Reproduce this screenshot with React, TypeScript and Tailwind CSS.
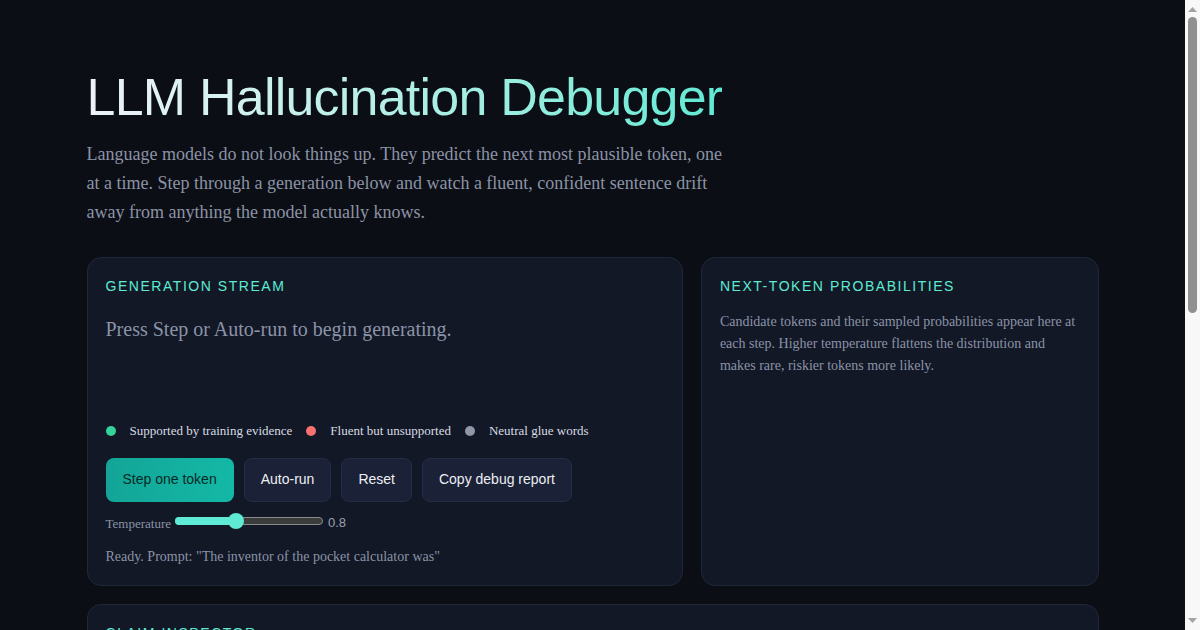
import React from "react";

const serif = { fontFamily: '"Liberation Serif", "Times New Roman", serif' };
const sans = { fontFamily: '"Liberation Sans", Arial, sans-serif' };

function Label({ children }: { children: React.ReactNode }) {
  return (
    <div
      className="text-[14px] leading-[20px] tracking-[0.11em] uppercase text-[#5eead4] font-medium"
      style={sans}
    >
      {children}
    </div>
  );
}

function LegendItem({ color, text }: { color: string; text: string }) {
  return (
    <div className="flex items-center gap-[14px]">
      <span className={`block h-[10px] w-[10px] rounded-full ${color}`} />
      <span>{text}</span>
    </div>
  );
}

function Scrollbar() {
  return (
    <div className="relative h-full w-[15px] shrink-0 bg-[#f8f8f8]">
      <svg className="absolute left-[3px] top-[7px]" width="9" height="5" viewBox="0 0 9 5">
        <polygon points="4.5,0 9,5 0,5" fill="#a3a3a3" />
      </svg>
      <div className="absolute left-[3px] top-[17px] h-[296px] w-[9px] rounded-[5px] bg-[#909090]" />
      <svg className="absolute left-[3px] top-[618px]" width="9" height="5" viewBox="0 0 9 5">
        <polygon points="0,0 9,0 4.5,5" fill="#a3a3a3" />
      </svg>
    </div>
  );
}

export default function App() {
  return (
    <div className="flex h-screen overflow-hidden bg-[#0b0e14] text-[#e5e7eb]" style={serif}>
      <div className="min-w-0 flex-1 overflow-hidden">
        <div className="mx-auto max-w-[1012px] pt-[69px] pb-16">
          <h1
            className="w-fit text-[52px] leading-[1.1] tracking-[-0.015em] font-normal bg-linear-to-r from-[#eef2f8] to-[#5eead4] bg-clip-text text-transparent"
            style={sans}
          >
            LLM Hallucination Debugger
          </h1>
          <p className="mt-[14px] max-w-[640px] text-[18px] leading-[1.6] text-[#8b93a7]">
            Language models do not look things up. They predict the next most plausible token, one
            at a time. Step through a generation below and watch a fluent, confident sentence drift
            away from anything the model actually knows.
          </p>

          <div className="mt-[30px] grid grid-cols-[1.5fr_1fr] gap-[18px]">
            <section className="rounded-[14px] border border-[#1f2839] bg-[#121826] p-[18px]">
              <Label>Generation stream</Label>
              <div className="mt-[17px] min-h-[93px] text-[20px] leading-[32px] text-[#8b93a7]">
                Press Step or Auto-run to begin generating.
              </div>
              <div className="mt-[15px] flex items-center gap-[14px] text-[13px] leading-[20px] text-[#d7dbe3]">
                <LegendItem color="bg-[#34d399]" text="Supported by training evidence" />
                <LegendItem color="bg-[#f87171]" text="Fluent but unsupported" />
                <LegendItem color="bg-[#8f97a9]" text="Neutral glue words" />
              </div>
              <div className="mt-[17px] flex gap-[10px] text-[14px]" style={sans}>
                <button className="h-[44px] rounded-[8px] bg-linear-to-r from-[#13a597] to-[#14b8a6] px-[17px] text-[#052a26]">
                  Step one token
                </button>
                <button className="h-[44px] rounded-[8px] border border-[#252d44] bg-[#1b2136] px-4 text-[#eceff4]">
                  Auto-run
                </button>
                <button className="h-[44px] rounded-[8px] border border-[#252d44] bg-[#1b2136] px-4 text-[#eceff4]">
                  Reset
                </button>
                <button className="h-[44px] rounded-[8px] border border-[#252d44] bg-[#1b2136] px-4 text-[#eceff4]">
                  Copy debug report
                </button>
              </div>
              <div className="mt-[8px] flex h-[22px] items-center text-[13px] text-[#8b93a7]">
                <span className="pt-[6px]">Temperature</span>
                <div className="relative ml-[4px] h-[16px] w-[148px]">
                  <div className="absolute left-0 right-0 top-[4px] h-[8px] rounded-full border border-[#8a8a8a] bg-[#3b3b3b]" />
                  <div className="absolute left-0 top-[4px] h-[8px] w-[62px] rounded-full bg-[#5eead4]" />
                  <div className="absolute left-[53px] top-0 h-[16px] w-[16px] rounded-full bg-[#5eead4]" />
                </div>
                <span className="ml-[5px] pt-[5px] text-[#9aa1b0]" style={sans}>
                  0.8
                </span>
              </div>
              <div className="mt-[15px] text-[14px] leading-[20px] text-[#8b93a7]">
                Ready. Prompt: "The inventor of the pocket calculator was"
              </div>
            </section>

            <section className="rounded-[14px] border border-[#1f2839] bg-[#121826] p-[18px]">
              <Label>Next-token probabilities</Label>
              <p className="mt-[15px] text-[14px] leading-[22px] text-[#8b93a7]">
                Candidate tokens and their sampled probabilities appear here at each step. Higher
                temperature flattens the distribution and makes rare, riskier tokens more likely.
              </p>
            </section>
          </div>

          <section className="mt-[18px] rounded-[14px] border border-[#1f2839] bg-[#121826] p-[18px]">
            <Label>Claim inspector</Label>
            <p className="mt-[14px] text-[14px] leading-[22px] text-[#8b93a7]">
              Once a sentence is generated, each factual claim is listed here with the evidence the
              model could have drawn on, and a verdict on whether the claim is supported.
            </p>
            <div className="h-[120px]" />
          </section>
        </div>
      </div>
      <Scrollbar />
    </div>
  );
}
